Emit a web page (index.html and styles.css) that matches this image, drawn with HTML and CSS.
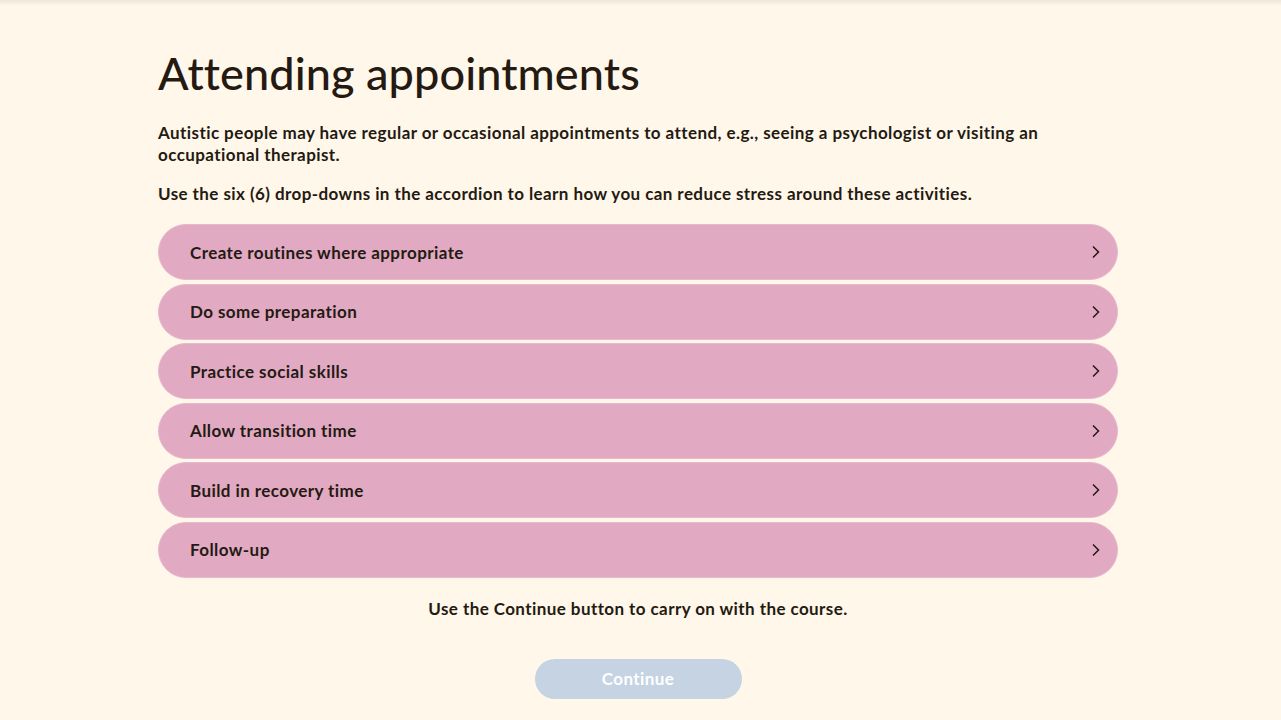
FILE: index.html
```html
<!DOCTYPE html>
<html lang="en">
<head>
<meta charset="utf-8">
<title>Attending appointments</title>
<link rel="stylesheet" href="styles.css">
</head>
<body>
<div class="topshadow"></div>
<main class="page">
  <h1 class="title">Attending appointments</h1>
  <p class="intro">Autistic people may have regular or occasional appointments to attend, e.g., seeing a psychologist or visiting an occupational therapist.</p>
  <p class="intro">Use the six (6) drop-downs in the accordion to learn how you can reduce stress around these activities.</p>
  <div class="accordion">
    <button class="item"><span>Create routines where appropriate</span><svg class="chev" viewBox="0 0 10 14" width="10" height="14"><path d="M2 1.5 L7.5 7 L2 12.5" fill="none" stroke="#241a12" stroke-width="1.5"/></svg></button>
    <button class="item"><span>Do some preparation</span><svg class="chev" viewBox="0 0 10 14" width="10" height="14"><path d="M2 1.5 L7.5 7 L2 12.5" fill="none" stroke="#241a12" stroke-width="1.5"/></svg></button>
    <button class="item"><span>Practice social skills</span><svg class="chev" viewBox="0 0 10 14" width="10" height="14"><path d="M2 1.5 L7.5 7 L2 12.5" fill="none" stroke="#241a12" stroke-width="1.5"/></svg></button>
    <button class="item"><span>Allow transition time</span><svg class="chev" viewBox="0 0 10 14" width="10" height="14"><path d="M2 1.5 L7.5 7 L2 12.5" fill="none" stroke="#241a12" stroke-width="1.5"/></svg></button>
    <button class="item"><span>Build in recovery time</span><svg class="chev" viewBox="0 0 10 14" width="10" height="14"><path d="M2 1.5 L7.5 7 L2 12.5" fill="none" stroke="#241a12" stroke-width="1.5"/></svg></button>
    <button class="item"><span>Follow-up</span><svg class="chev" viewBox="0 0 10 14" width="10" height="14"><path d="M2 1.5 L7.5 7 L2 12.5" fill="none" stroke="#241a12" stroke-width="1.5"/></svg></button>
  </div>
  <p class="outro">Use the Continue button to carry on with the course.</p>
  <div class="actions"><button class="continue" disabled>Continue</button></div>
</main>
</body>
</html>
```
FILE: styles.css
```css
html, body {
  margin: 0;
  padding: 0;
  background: #fff7ea;
  color: #241a12;
  font-family: "Lato", "Noto Sans", sans-serif;
}
body { min-height: 720px; overflow: hidden; }
.topshadow {
  height: 6px;
  background: linear-gradient(#efe6d8, #fff7ea);
}
.page {
  width: 960px;
  margin-left: calc(50% - 482.5px);
  padding-top: 39px;
}
.title {
  margin: 0 0 21px;
  font-size: 45px;
  font-weight: 500;
  line-height: 56px;
  letter-spacing: 0.1px;
}
.intro {
  margin: 0 0 17px;
  font-size: 17px;
  font-weight: 700;
  line-height: 22px;
  letter-spacing: 0.42px;
}
.accordion {
  display: flex;
  flex-direction: column;
  gap: 3.6px;
  margin-top: 19px;
}
.item {
  display: flex;
  align-items: center;
  justify-content: space-between;
  height: 56px;
  padding: 0 16px 0 31px;
  border: 1px solid #e8b8cc;
  border-radius: 28px;
  background: #e1a9c2;
  font-family: inherit;
  font-size: 17px;
  font-weight: 700;
  letter-spacing: 0.42px;
  color: #241a12;
  text-align: left;
  cursor: pointer;
}
.chev { display: block; }
.outro {
  margin: 20px 0 0;
  text-align: center;
  font-size: 17px;
  font-weight: 700;
  line-height: 22px;
  letter-spacing: 0.42px;
}
.actions {
  display: flex;
  justify-content: center;
  margin-top: 39px;
}
.continue {
  width: 207px;
  height: 40px;
  border: none;
  border-radius: 20px;
  background: #c5d3e3;
  color: #ffffff;
  font-family: inherit;
  font-size: 17px;
  font-weight: 700;
  letter-spacing: 0.42px;
}
```
